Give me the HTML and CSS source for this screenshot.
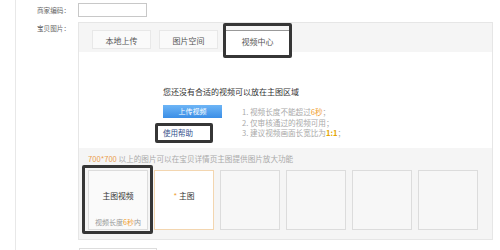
FILE: index.html
```html
<!DOCTYPE html>
<html lang="zh-CN">
<head>
<meta charset="utf-8">
<link rel="stylesheet" href="styles.css">
</head>
<body>
<div class="page">
  <div class="row row-code">
    <div class="label">商家编码：</div>
    <div class="input"></div>
  </div>
  <div class="row row-pics">
    <div class="label">宝贝图片：</div>
    <div class="panel">
      <div class="tabs">
        <div class="tab">本地上传</div>
        <div class="tab">图片空间</div>
        <div class="tab active">视频中心<span class="mark mark-tab"></span></div>
      </div>
      <div class="content">
        <div class="msg">您还没有合适的视频可以放在主图区域</div>
        <div class="actions">
          <div class="left">
            <div class="btn">上传视频</div>
            <div class="help">使用帮助<span class="mark mark-help"></span></div>
          </div>
          <ol class="tips">
            <li>1. 视频长度不能超过<em>6秒</em>；</li>
            <li>2. 仅审核通过的视频可用；</li>
            <li>3. 建议视频画面长宽比为<b>1:1</b>；</li>
          </ol>
        </div>
      </div>
      <div class="gallery">
        <div class="info"><em>700*700</em> 以上的图片可以在宝贝详情页主图提供图片放大功能</div>
        <div class="slots">
          <div class="slot slot-video">
            <div class="slot-title">主图视频</div>
            <div class="slot-sub">视频长度<em>6秒</em>内</div>
            <span class="mark mark-slot"></span>
          </div>
          <div class="slot slot-main"><div class="slot-title"><em>*</em> 主图</div></div>
          <div class="slot"></div>
          <div class="slot"></div>
          <div class="slot"></div>
          <div class="slot"></div>
        </div>
      </div>
    </div>
  </div>
  <div class="row row-next">
    <div class="label"></div>
    <div class="input input-next"></div>
  </div>
</div>
</body>
</html>
```

FILE: styles.css
```css
html, body {
  margin: 0;
  padding: 0;
  background: #fff;
}
body {
  font-family: "Noto Sans CJK SC", "Liberation Sans", sans-serif;
  color: #555;
  width: 500px;
  height: 250px;
  overflow: hidden;
}
.page {
  margin-left: 15px;
  border-left: 1px solid #e8e8e8;
  height: 250px;
  padding-top: 3px;
  box-sizing: border-box;
}
.row {
  display: flex;
  align-items: flex-start;
}
.label {
  width: 54px;
  padding-right: 8px;
  text-align: right;
  font-size: 6.6px;
  line-height: 14px;
  color: #666;
  flex: none;
}
.input {
  width: 69px;
  height: 14px;
  border: 1px solid #c8c8c8;
  box-sizing: border-box;
  background: #fff;
}
.row-pics {
  margin-top: 5px;
}
.row-pics .label {
  line-height: 12px;
}
.panel {
  width: 415px;
  height: 218px;
  border: 1px solid #e6e6e6;
  box-sizing: border-box;
  display: flex;
  flex-direction: column;
}
.tabs {
  height: 29px;
  background: #f5f5f5;
  display: flex;
  align-items: flex-start;
  padding: 7px 0 0 13px;
  box-sizing: border-box;
  gap: 8px;
}
.tab {
  width: 59px;
  height: 19px;
  border: 1px solid #e8e8e8;
  background: #fafafa;
  box-sizing: border-box;
  font-size: 8px;
  line-height: 19px;
  text-align: center;
  color: #555;
  position: relative;
}
.tab.active {
  width: 65px;
  height: 22px;
  margin-left: -1px;
  background: #fff;
  border-color: #999 #e8e8e8 transparent;
  line-height: 22px;
}
.mark {
  position: absolute;
  border: 3px solid #363636;
  border-radius: 2px;
  box-sizing: border-box;
}
.mark-tab {
  left: -3px;
  top: -8px;
  width: 69px;
  height: 35px;
}
.content {
  height: 96px;
  background: #fff;
  padding: 34px 0 0 84px;
  box-sizing: border-box;
}
.msg {
  font-size: 8px;
  line-height: 12px;
  color: #333;
}
.actions {
  display: flex;
  margin-top: 7px;
  gap: 20px;
}
.left {
  width: 59px;
}
.btn {
  width: 59px;
  height: 13px;
  background: linear-gradient(#6db5f6, #3b8ee6);
  color: #fff;
  font-size: 7px;
  line-height: 13px;
  text-align: center;
}
.help {
  position: relative;
  margin-top: 9px;
  font-size: 7.5px;
  line-height: 12px;
  color: #34528c;
}
.mark-help {
  left: -8px;
  top: -4px;
  width: 58px;
  height: 20px;
}
.tips {
  list-style: none;
  margin: 0;
  padding: 2px 0 0;
  font-size: 7.6px;
  line-height: 10.5px;
  color: #aaa;
}
.tips em {
  font-style: normal;
  color: #f0a030;
}
.tips b {
  color: #e4a400;
}
.gallery {
  flex: 1;
  background: #f5f5f5;
  padding: 5px 0 0 9px;
  box-sizing: border-box;
}
.info {
  font-size: 7.6px;
  line-height: 12px;
  color: #aaa;
}
.info em {
  font-style: normal;
  color: #eba050;
}
.slots {
  display: flex;
  gap: 6px;
  margin-top: 5px;
}
.slot {
  width: 60px;
  height: 60px;
  border: 1px solid #dcdcdc;
  box-sizing: border-box;
  background: #f7f7f7;
  position: relative;
  display: flex;
  flex-direction: column;
  align-items: center;
}
.slot-video {
  background: #fafafa;
}
.slot-main {
  background: #fff;
  border-color: #f3d6b0;
}
.slot-title {
  margin-top: 19px;
  font-size: 7.8px;
  line-height: 12px;
  color: #333;
}
.slot-title em {
  font-style: normal;
  color: #f0a030;
}
.slot-sub {
  margin-top: auto;
  margin-bottom: 1px;
  font-size: 7px;
  line-height: 12px;
  color: #999;
  white-space: nowrap;
}
.slot-sub em {
  font-style: normal;
  color: #f0a030;
}
.mark-slot {
  left: -7px;
  top: -6px;
  width: 71px;
  height: 69px;
}
.row-next {
  margin-top: 8px;
}
.input-next {
  width: 78px;
  margin-left: 1px;
  border-color: #ddd;
}
```
